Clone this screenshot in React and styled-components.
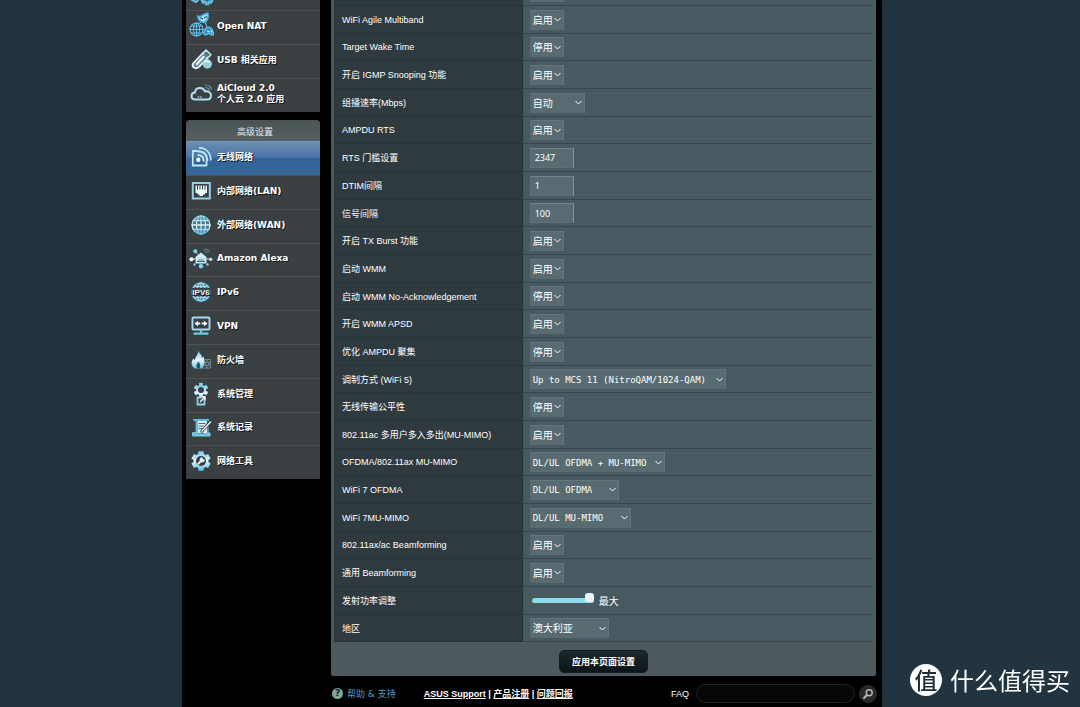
import React, { useState } from 'react';
import styled, { createGlobalStyle } from 'styled-components';

const GlobalStyle = createGlobalStyle`
  * {
    box-sizing: border-box;
  }

  body {
    margin: 0;
    overflow: hidden;
    background: #22343f;
    color: #fff;
    font-family: "Liberation Sans", "Noto Sans CJK SC", sans-serif;
    font-size: 9px;
  }

  input, select, button {
    margin: 0;
    font-family: inherit;
    color: inherit;
  }
`;

const Page = styled.div`
  display: flex;
  justify-content: center;
  min-height: 100vh;
  padding-right: 16px;
`;

const Shell = styled.div`
  width: 100%;
  max-width: 700px;
  background: #000;
  box-shadow: 0 0 8px #1a2a36;
`;

// scrolled a little way down the page
const Content = styled.div`
  display: flex;
  align-items: flex-start;
  gap: 11px;
  margin-top: -24px;
  padding: 0 6px 0 4px;
`;

const Sidebar = styled.nav`
  display: flex;
  flex-direction: column;
  gap: 8px;
  width: 134px;
  flex-shrink: 0;
  font-family: "DejaVu Sans", "Noto Sans CJK SC", sans-serif;
`;

const MenuBlock = styled.div`
  background: #3a4042;
  border-radius: ${props => (props.$rounded ? '4px 4px 0 0' : '0')};
  overflow: hidden;
`;

const MenuTitle = styled.div`
  height: 21px;
  padding-left: 4px;
  line-height: 24px;
  text-align: center;
  color: #e4e8e9;
  background: linear-gradient(#495457, #566063);
`;

const MenuItem = styled.a`
  display: flex;
  align-items: center;
  gap: 5px;
  height: 34px;
  padding: 0 4px 3px;
  font-weight: bold;
  line-height: 11px;
  color: #fff;
  text-decoration: none;
  text-shadow: 1px 1px 0 #14181a;
  border-top: 1px solid ${props => (props.$active ? '#7294b8' : '#4d5456')};
  background: ${props => (props.$active
    ? 'linear-gradient(#6c8db2 0%, #4b75a8 45%, #33629a 50%, #386799 100%)'
    : 'linear-gradient(#3b4143, #3a4042)')};

  &:nth-child(5n) {
    height: 33px;
  }
`;

const Icon = styled.svg`
  width: 22px;
  height: 22px;
  flex-shrink: 0;
  overflow: visible;
  fill: none;
  stroke: url(#ice);
  stroke-width: 1.5;
  stroke-linecap: round;
  stroke-linejoin: round;
`;

const Defs = styled.svg`
  display: block;
  width: 0;
  height: 0;
`;

const Panel = styled.main`
  flex: 1;
  min-width: 0;
  padding: 2px 3px 3px;
  background: #4d595d;
  border-radius: 0 0 2px 2px;
`;

const Table = styled.table`
  width: 100%;
  table-layout: fixed;
  border-collapse: separate;
  border-spacing: 0;
`;

const Row = styled.tr`
  height: 28px;

  &:nth-child(3n) {
    height: 27px;
  }
`;

const LabelCell = styled.th`
  width: 35%;
  padding: 0 8px;
  font-weight: normal;
  text-align: left;
  white-space: nowrap;
  background: #2f3a3e;
  border-right: 1px solid #263136;
  border-bottom: 1px solid #293438;
`;

const FieldCell = styled.td`
  padding: 0 7px;
  background: #475a5f;
  border-bottom: 1px solid #36474d;
`;

const SelectBox = styled.span`
  display: inline-grid;
  align-items: center;
  vertical-align: middle;
  width: ${props => props.$width};
`;

const SelectInput = styled.select`
  grid-area: 1 / 1;
  appearance: none;
  width: 100%;
  height: 20px;
  padding: 0 3px;
  font-family: ${props => (props.$mono
    ? '"DejaVu Sans Mono", monospace'
    : '"Liberation Sans", "Noto Sans CJK SC", sans-serif')};
  font-size: ${props => (props.$mono ? '9px' : '10px')};
  color: #fff;
  background: #576b71;
  border: 1px solid #62767b;
  border-width: 1px 1px 0 0;
  border-radius: 0;
  outline: none;
`;

const Chevron = styled.svg`
  grid-area: 1 / 1;
  justify-self: end;
  width: 7px;
  height: 5px;
  margin-right: 3px;
  pointer-events: none;
  fill: none;
  stroke: #fff;
`;

const TextInput = styled.input`
  display: block;
  width: 44px;
  height: 20px;
  padding: 0 4px;
  font-family: "Noto Sans", sans-serif;
  font-size: 9px;
  background: #576b71;
  border: 1px solid;
  border-color: #71858a #82959a #5d7177 #5d7177;
  border-radius: 0;
  outline: none;
`;

const SliderLine = styled.label`
  display: flex;
  align-items: center;
  gap: 5px;
  padding-left: 2px;
  font-size: 10px;
`;

const Slider = styled.input`
  appearance: none;
  width: 62px;
  height: 5px;
  background: transparent;

  &::-webkit-slider-runnable-track {
    height: 5px;
    border-radius: 3px;
    background: #8fdcec;
  }

  &::-webkit-slider-thumb {
    appearance: none;
    width: 9px;
    height: 9px;
    margin-top: -5px;
    border-radius: 3px;
    background: #eef3fb;
  }
`;

const Actions = styled.div`
  display: flex;
  justify-content: center;
  padding-top: 8px;
`;

const ApplyButton = styled.button`
  height: 23px;
  padding: 0 12px;
  font-size: 9px;
  font-weight: bold;
  background: linear-gradient(#1d292c, #0b1416);
  border: 1px solid #131d1f;
  border-radius: 5px;
`;

const Footer = styled.footer`
  display: flex;
  align-items: center;
  padding: 8px 5px 4px 150px;
`;

const HelpLink = styled.a`
  display: flex;
  align-items: center;
  gap: 4px;
  font-family: "DejaVu Sans", "Noto Sans CJK SC", sans-serif;
  color: #569ac6;
  text-decoration: none;
`;

const HelpMark = styled.span`
  width: 11px;
  height: 11px;
  line-height: 11px;
  text-align: center;
  font-weight: bold;
  color: #10201d;
  background: #7fa79c;
  border-radius: 50%;
`;

const Links = styled.div`
  margin-left: 28px;
  font-weight: bold;

  a {
    color: #fff;
  }
`;

const Faq = styled.form`
  display: flex;
  align-items: center;
  margin-left: auto;

  label {
    margin-right: 7px;
  }
`;

const FaqInput = styled.input`
  width: 159px;
  height: 19px;
  padding: 0 9px;
  background: #070707;
  border: 1px solid #222;
  border-radius: 10px;
  outline: none;
`;

const FaqButton = styled.button`
  display: grid;
  place-items: center;
  width: 18px;
  height: 18px;
  margin-left: 4px;
  padding: 0;
  background: #2a2a2a;
  border: 0;
  border-radius: 50%;
`;

const Brand = styled.div`
  position: fixed;
  right: 10px;
  bottom: 11px;
  display: flex;
  align-items: center;
  gap: 8px;
  font-family: "Noto Sans CJK SC", sans-serif;
  font-size: 24px;
  line-height: 32px;
`;

const BrandMark = styled.span`
  width: 32px;
  height: 32px;
  line-height: 31px;
  text-align: center;
  font-size: 23px;
  font-weight: 500;
  color: #1f2d38;
  background: #fff;
  border-radius: 50%;
`;

const gear = (cx, cy, r) => {
  const points = [];
  for (let i = 0; i < 6; i++) {
    [[-15, r + 2.5], [15, r + 2.5], [22, r], [38, r]].forEach(([deg, len]) => {
      const a = ((i * 60 + deg - 90) * Math.PI) / 180;
      points.push(`${(cx + len * Math.cos(a)).toFixed(2)} ${(cy + len * Math.sin(a)).toFixed(2)}`);
    });
  }
  return `M${points.join('L')}Z`;
};

const ICONS = {
  traffic: (
    <g strokeWidth="2">
      <path d="M2 19l4 2 4-4" />
      <path d={gear(17, 18, 3)} />
    </g>
  ),
  nat: (
    <g>
      <g strokeWidth="1.1" stroke="#63bfe6">
        <circle cx="6.5" cy="14.5" r="6.5" />
        <ellipse cx="6.5" cy="14.5" rx="3" ry="6.5" />
        <path d="M6.5 8v13M0 14.5h13M1.2 11h10.6M1.2 18h10.6" />
        <path d="M15 7l2 5M10 7.5l3-2" />
      </g>
      <path d="M7.500 1c2 1 4 .6 5.500-1.200C14.500-1 16-1 18-2c.6 4-.4 8-4 9.500C10.500 7 8 4.500 7.500 1z" fill="#a4e0f4" stroke="#48ade0" />
      <path d="M10.500 3l2 .8M14.500 2.800l2-1" stroke="#1d4d66" strokeWidth="1.200" />
      <path d="M13.500 18c1-4 3-6 5.500-6 2.800.5 4.500 4 4.500 7.500-1.500 1.200-3.200.2-4.300-1.200-1.500.2-2.200 1.600-3.700 1.700-1 0-1.800-.8-2-2z" fill="#2f93cc" stroke="#6fcaee" strokeWidth="1.200" />
      <path d="M17.500 16l1.800.8M21 15.500l.8 1.500" stroke="#d9f4fc" strokeWidth="1.200" />
    </g>
  ),
  usb: (
    <g>
      <path d="M3.500 14l9-9.500c2.800-2.200 7 1.500 4.800 4.800l-8.800 9c-3.800 2.500-7.500-.8-5-4.300z" fill="#5f8796" stroke="#e6f6fb" strokeWidth="1.800" />
      <path d="M7 15l6.500-7" stroke="#e9f8fc" strokeWidth="2.400" />
      <path d="M13.500 3.500l2.500-2.500 5 4.800-2.700 2.700" fill="#55717c" stroke="#c9e6f0" />
      <circle cx="17.300" cy="15" r="4.700" fill="#9ccfd9" stroke="none" />
      <path d="M14.500 13c1.500-1.200 3.500-1.200 5 0" stroke="#e9f8fc" />
    </g>
  ),
  cloud: (
    <g>
      <path d="M5.500 16.500C2.500 16.500 1.500 14.500 1.500 13c0-2 1.500-3.500 3.500-3.600C5.200 6.500 7.500 5 10 5c2.400 0 4.200 1.300 5 3.400 3.500-.5 6 1.300 6 4.100 0 2.500-1.700 4-4 4z" strokeWidth="2" stroke="#b3dcec" />
      <path d="M15.500 4.500c1.800.2 3.400 1.200 4 2.800M15.500 2c3 .2 5 1.600 6 4" strokeWidth="1.200" stroke="#7e98a2" />
      <path d="M8 14h5" strokeDasharray="1 1.500" strokeWidth="1.200" />
    </g>
  ),
  wireless: (
    <g strokeLinecap="butt" stroke="#bfe6f5">
      <path d="M7.500 5H2.800V19.500H16.500V15" strokeWidth="1.800" />
      <circle cx="8.300" cy="13.800" r="2.200" fill="#fff" stroke="none" />
      <path d="M7.500 9c4 0 6.300 2.200 6.300 6.500" strokeWidth="2.200" />
      <path d="M7.500 5.300c6 0 9.800 3.500 9.800 10" strokeWidth="1.900" />
      <path d="M9 1.800c7 .2 11.700 4.800 11.800 12.700" strokeWidth="1.800" />
    </g>
  ),
  lan: (
    <g>
      <rect x="2.800" y="3" width="17" height="15.500" strokeWidth="2" strokeLinejoin="miter" stroke="#8fd2ea" />
      <path d="M5.500 5.500h1.500v4h1V5.500h1.500v4h1V5.500h1.500v4h1V5.500h1.500v4h1V5.500H17v7.500h-2v1.500h-2v1.500H9.500v-1.500h-2V13h-2z" fill="#eef9fc" stroke="none" />
    </g>
  ),
  wan: (
    <g strokeWidth="1.300">
      <circle cx="11" cy="11" r="9" fill="#47788c" />
      <ellipse cx="11" cy="11" rx="4.500" ry="9" />
      <path d="M11 2v18M2 11h18M3.300 6.500h15.400M3.300 15.500h15.400" />
    </g>
  ),
  alexa: (
    <g>
      <path d="M5.500 9L11 4.500 16.500 9v6.500h-11z" fill="#c9eef8" stroke="none" />
      <path d="M7.500 13c0-3.500 7-3.500 7 0z" fill="#8db7c6" stroke="none" />
      <path d="M7.500 13.500h7" stroke="#3c6577" strokeWidth="1.200" />
      <path d="M6 4.500l2 2M3 11h2M17 11h2M11 16v2" strokeWidth="1" />
      <g fill="#7fd2ea" stroke="none">
        <circle cx="5.300" cy="3.300" r="2" />
        <circle cx="1.500" cy="11.300" r="2.100" fill="#f2fbfe" />
        <circle cx="20.700" cy="11.300" r="1.600" fill="#d4f0f8" />
        <circle cx="11" cy="18.300" r="2.200" />
        <circle cx="4.500" cy="16.500" r="1.200" />
        <circle cx="17.500" cy="16.500" r="1.200" />
      </g>
      <path d="M14 2c2-1 4.500-.6 5 1.500M15.500 4h2" stroke="#58777c" strokeWidth="1.600" />
    </g>
  ),
  ipv6: (
    <g strokeWidth="1.500">
      <circle cx="11" cy="11" r="9" stroke="#6fc6e6" />
      <ellipse cx="11" cy="11" rx="4.200" ry="9" stroke="#9cd8ec" />
      <path d="M11 2v18M4 5.500h14M4 16.500h14" />
      <rect x="1.500" y="7" width="19" height="8" fill="#344349" stroke="none" />
      <text x="11" y="14" textAnchor="middle" fontSize="8" fontWeight="bold" fontFamily="Liberation Sans, sans-serif" fill="#f2fafd" stroke="none">IPV6</text>
    </g>
  ),
  vpn: (
    <g>
      <rect x="2.500" y="2.500" width="17" height="12" rx="1" strokeWidth="1.900" stroke="#a5dbee" />
      <path d="M6 8.500h3.500M12.500 8.500H16" stroke="#f1fafd" strokeWidth="1.800" />
      <path d="M8 5.800v5.400l-3.400-2.700zM14 5.800v5.400l3.400-2.700z" fill="#f1fafd" stroke="none" />
      <path d="M11 15v3M4.500 18.700h13" stroke="#6fc8e8" strokeWidth="2.200" />
    </g>
  ),
  firewall: (
    <g>
      <path d="M8.500 1.500c.5 3 3.800 4 3.300 7.500l1.500-1.500c2 4.500 2 8.500-1.500 12H5C.8 17 .8 13 3.500 9.500l1.500 2C5 7.500 8.500 5.500 8.500 1.500z" fill="url(#ice)" stroke="none" />
      <path d="M7.500 19.500c-2.200-2.500-.5-5 1-7 1.500 2.200 2.700 5 .8 7z" fill="#33505c" stroke="none" />
      <path d="M14.500 10.500H20.500V19H12M14.500 13.300h6M13.500 16.200h7M17 10.500v2.800M15.500 13.300v3M18.500 13.300v3M17 16.200v2.800" stroke="#6d8993" strokeWidth="1" />
    </g>
  ),
  admin: (
    <g>
      <path d={gear(11, 7, 5)} fill="url(#ice)" stroke="none" />
      <circle cx="11" cy="7" r="3" fill="#3a4042" stroke="none" />
      <path d="M11 14.500H7.500v7h7V18" strokeWidth="1.800" stroke="#8fd2ea" />
      <path d="M10.500 18.500l3.500-3.500M12 13.800h3V17" strokeWidth="1.600" stroke="#e4f5fa" />
    </g>
  ),
  log: (
    <g>
      <path d="M4 3h14.500M6.500 3v13" stroke="#5fb9dc" strokeWidth="1.900" />
      <rect x="7.500" y="4" width="9.500" height="12" fill="#d7eff6" stroke="none" />
      <path d="M9 6.500h6M9 9h4M9 11.500h3" stroke="#466b7a" strokeWidth="1" />
      <path d="M12 14l8.500-9.500" stroke="#3a4042" strokeWidth="3.200" />
      <path d="M12 14l8.500-9" stroke="#e6f6fb" strokeWidth="1.500" />
      <path d="M18 10v6M2.500 16v3h17.500v-3h-4l-1 1H8l-1-1z" fill="#68bfde" stroke="#7ed0ec" strokeWidth="1" />
    </g>
  ),
  tools: (
    <g>
      <path d={gear(11, 11, 7.500)} fill="url(#ice)" stroke="none" />
      <circle cx="11" cy="11" r="5" fill="#3a4042" stroke="none" />
      <path d="M8.300 13.700l2.700-2.700" stroke="#d9f4fc" strokeWidth="2" />
      <path d="M14.200 10a2 2 0 1 1-2.200-2.200" fill="#d9f4fc" stroke="#d9f4fc" strokeWidth="1.300" />
    </g>
  ),
};

const generalMenu = [
  { icon: 'traffic', title: '流量分析' },
  { icon: 'nat', label: 'Open NAT' },
  { icon: 'usb', label: 'USB 相关应用' },
  { icon: 'cloud', label: <>AiCloud 2.0<br />个人云 2.0 应用</> },
];

const advancedMenu = [
  { icon: 'wireless', label: '无线网络', active: true },
  { icon: 'lan', label: '内部网络(LAN)' },
  { icon: 'wan', label: '外部网络(WAN)' },
  { icon: 'alexa', label: 'Amazon Alexa' },
  { icon: 'ipv6', label: 'IPv6' },
  { icon: 'vpn', label: 'VPN' },
  { icon: 'firewall', label: '防火墙' },
  { icon: 'admin', label: '系统管理' },
  { icon: 'log', label: '系统记录' },
  { icon: 'tools', label: '网络工具' },
];

const settings = [
  { title: 'WiFi', value: '' },
  { label: 'WiFi Agile Multiband', value: '启用' },
  { label: 'Target Wake Time', value: '停用' },
  { label: '开启 IGMP Snooping 功能', value: '启用' },
  { label: '组播速率(Mbps)', value: '自动', width: '55px' },
  { label: 'AMPDU RTS', value: '启用' },
  { label: 'RTS 门槛设置', type: 'text', value: '2347' },
  { label: 'DTIM间隔', type: 'text', value: '1' },
  { label: '信号间隔', type: 'text', value: '100' },
  { label: '开启 TX Burst 功能', value: '启用' },
  { label: '启动 WMM', value: '启用' },
  { label: '启动 WMM No-Acknowledgement', value: '停用' },
  { label: '开启 WMM APSD', value: '启用' },
  { label: '优化 AMPDU 聚集', value: '停用' },
  { label: '调制方式 (WiFi 5)', value: 'Up to MCS 11 (NitroQAM/1024-QAM)', width: '196px', mono: true },
  { label: '无线传输公平性', value: '停用' },
  { label: '802.11ac 多用户多入多出(MU-MIMO)', value: '启用' },
  { label: 'OFDMA/802.11ax MU-MIMO', value: 'DL/UL OFDMA + MU-MIMO', width: '135px', mono: true },
  { label: 'WiFi 7 OFDMA', value: 'DL/UL OFDMA', width: '89px', mono: true },
  { label: 'WiFi 7MU-MIMO', value: 'DL/UL MU-MIMO', width: '101px', mono: true },
  { label: '802.11ax/ac Beamforming', value: '启用' },
  { label: '通用 Beamforming', value: '启用' },
  { label: '发射功率调整', type: 'range', value: '最大' },
  { label: '地区', value: '澳大利亚', width: '79px' },
];

function MenuList({ items }) {
  return items.map(item => (
    <MenuItem key={item.icon} href="#" $active={item.active} aria-label={item.title}>
      <Icon viewBox="0 0 22 22" aria-hidden="true">{ICONS[item.icon]}</Icon>
      {item.label && <span>{item.label}</span>}
    </MenuItem>
  ));
}

function Field({ id, type, title, value, width = '34px', mono }) {
  const [current, setCurrent] = useState(type === 'range' ? 100 : value);
  const handleChange = e => setCurrent(e.target.value);

  if (type === 'text') {
    return <TextInput id={id} type="text" value={current} onChange={handleChange} />;
  }
  if (type === 'range') {
    return (
      <SliderLine>
        <Slider id={id} type="range" min="0" max="100" value={current} onChange={handleChange} />
        {value}
      </SliderLine>
    );
  }
  const options = value === '启用' || value === '停用' ? ['启用', '停用'] : [value];
  return (
    <SelectBox $width={width}>
      <SelectInput id={id} $mono={mono} value={current} onChange={handleChange} aria-label={title}>
        {options.map(option => <option key={option}>{option}</option>)}
      </SelectInput>
      <Chevron viewBox="0 0 7 5" aria-hidden="true">
        <path d="M.5 1L3.500 4 6.500 1" />
      </Chevron>
    </SelectBox>
  );
}

function App() {
  return (
    <Page>
      <GlobalStyle />
      <Shell>
        <Defs aria-hidden="true">
          <linearGradient id="ice" gradientUnits="userSpaceOnUse" x1="0" y1="2" x2="0" y2="20">
            <stop offset="0" stopColor="#7fcdea" />
            <stop offset=".5" stopColor="#e4f5fa" />
            <stop offset="1" stopColor="#5fbfe4" />
          </linearGradient>
        </Defs>
        <Content>
          <Sidebar>
            <MenuBlock>
              <MenuList items={generalMenu} />
            </MenuBlock>
            <MenuBlock $rounded>
              <MenuTitle>高级设置</MenuTitle>
              <MenuList items={advancedMenu} />
            </MenuBlock>
          </Sidebar>
          <Panel>
            <Table>
              <tbody>
                {settings.map((item, i) => (
                  <Row key={item.label || item.title}>
                    <LabelCell scope="row">
                      {item.label && <label htmlFor={`field-${i}`}>{item.label}</label>}
                    </LabelCell>
                    <FieldCell>
                      <Field id={`field-${i}`} {...item} />
                    </FieldCell>
                  </Row>
                ))}
              </tbody>
            </Table>
            <Actions>
              <ApplyButton type="button">应用本页面设置</ApplyButton>
            </Actions>
          </Panel>
        </Content>
        <Footer>
          <HelpLink href="#">
            <HelpMark>?</HelpMark>
            帮助 &amp; 支持
          </HelpLink>
          <Links>
            <a href="#">ASUS Support</a> | <a href="#">产品注册</a> | <a href="#">问题回报</a>
          </Links>
          <Faq onSubmit={e => e.preventDefault()}>
            <label htmlFor="faq">FAQ</label>
            <FaqInput id="faq" type="text" />
            <FaqButton type="submit" aria-label="搜索">
              <svg width="12" height="12" viewBox="0 0 12 12" fill="none" stroke="#b9b9b9" strokeLinecap="round">
                <circle cx="7.200" cy="4.800" r="3" strokeWidth="1.400" />
                <path d="M4.800 7.200L2 10" strokeWidth="2" />
              </svg>
            </FaqButton>
          </Faq>
        </Footer>
      </Shell>
      <Brand>
        <BrandMark>值</BrandMark>
        什么值得买
      </Brand>
    </Page>
  );
}

export default App;
